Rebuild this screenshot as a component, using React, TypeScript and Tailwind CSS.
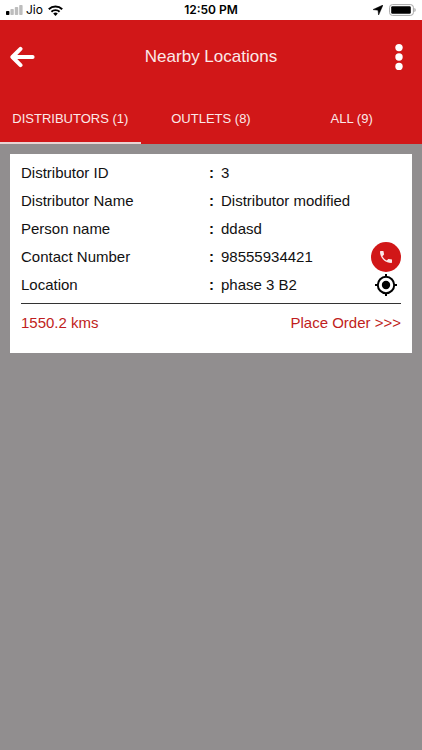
import { MdPhone } from 'react-icons/md';

interface Field {
  label: string;
  value: string;
  action?: 'call' | 'locate';
}

const tabs = ['DISTRIBUTORS (1)', 'OUTLETS (8)', 'ALL (9)'];

const fields: Field[] = [
  { label: 'Distributor ID', value: '3' },
  { label: 'Distributor Name', value: 'Distributor modified' },
  { label: 'Person name', value: 'ddasd' },
  { label: 'Contact Number', value: '98555934421', action: 'call' },
  { label: 'Location', value: 'phase 3 B2', action: 'locate' },
];

function StatusBar() {
  return (
    <div className="grid h-5 grid-cols-3 items-center bg-white px-1.5 text-black">
      <div className="flex items-center">
        <svg width="17" height="10" viewBox="0 0 17 10">
          <rect x="0" y="6" width="3.4" height="4" rx="0.8" fill="#000" />
          <rect x="4.4" y="4" width="3.4" height="6" rx="0.8" fill="#bdbdbd" />
          <rect x="8.8" y="2" width="3.4" height="8" rx="0.8" fill="#bdbdbd" />
          <rect x="13.2" y="0" width="3.4" height="10" rx="0.8" fill="#bdbdbd" />
        </svg>
        <span className="ml-[3px] font-['Inter',sans-serif] text-[12px]">Jio</span>
        <svg className="ml-[5px]" width="15" height="11" viewBox="0 0 15 11" fill="none" stroke="#000">
          <path d="M0.8 4.2a9.6 9.6 0 0 1 13.4 0" strokeWidth="2" />
          <path d="M3.4 6.8a5.9 5.9 0 0 1 8.2 0" strokeWidth="1.9" />
          <path d="M7.5 11 5.2 8.6a3.3 3.3 0 0 1 4.6 0z" fill="#000" stroke="none" />
        </svg>
      </div>
      <span className="text-center font-['Inter',sans-serif] text-[12px] font-semibold">12:50 PM</span>
      <div className="flex items-center justify-end gap-1.5">
        <svg width="10" height="10" viewBox="0 0 10 10">
          <path d="M10 0 5.6 10 5 5.2 0 4.6z" fill="#000" stroke="#000" strokeWidth="0.5" strokeLinejoin="round" />
        </svg>
        <svg width="27" height="12" viewBox="0 0 27 12">
          <rect x="0.6" y="0.6" width="23.8" height="10.8" rx="2.8" fill="none" stroke="#a6a6a6" />
          <rect x="2.2" y="2.2" width="19.6" height="7.6" rx="1.2" fill="#000" />
          <path d="M25.4 4v4c1.7-.5 1.7-3.5 0-4z" fill="#a6a6a6" />
        </svg>
      </div>
    </div>
  );
}

function Header() {
  return (
    <header className="bg-[#d11718] text-[#fbe9e9]">
      <div className="flex h-[74px] items-center justify-between px-[9px]">
        <button type="button" aria-label="Back" className="flex w-7">
          <svg width="26" height="22" viewBox="0 0 26 22" fill="none" stroke="#fff" strokeWidth="4" strokeLinecap="round" strokeLinejoin="round">
            <path d="M23.6 11H4M11.5 2.8 3.4 11l8.1 8.2" />
          </svg>
        </button>
        <h1 className="text-[17px]">Nearby Locations</h1>
        <button type="button" aria-label="More options" className="flex w-7 justify-center">
          <svg width="8" height="28" viewBox="0 0 8 28" fill="#fff">
            <circle cx="4" cy="4.6" r="3.7" />
            <circle cx="4" cy="14" r="3.7" />
            <circle cx="4" cy="23.4" r="3.7" />
          </svg>
        </button>
      </div>
      <nav className="grid h-[50px] grid-cols-3">
        {tabs.map((tab, i) => (
          <button
            key={tab}
            type="button"
            className={`border-b-2 pt-0.5 text-[13px] ${i === 0 ? 'border-[#e8d4d4]' : 'border-transparent'}`}
          >
            {tab}
          </button>
        ))}
      </nav>
    </header>
  );
}

function FieldAction({ action }: { action: 'call' | 'locate' }) {
  if (action === 'call') {
    return (
      <button
        type="button"
        aria-label="Call"
        className="flex size-[30px] items-center justify-center rounded-full bg-[#d11718] text-[#fbe9e9]"
      >
        <MdPhone size={16} />
      </button>
    );
  }

  return (
    <button type="button" aria-label="Show on map" className="flex w-[30px] justify-center">
      <svg width="24" height="24" viewBox="0 0 24 24" fill="none" stroke="#000" strokeWidth="2">
        <circle cx="12" cy="12" r="8.2" />
        <circle cx="12" cy="12" r="4.2" fill="#000" stroke="none" />
        <path d="M12 1v3M12 20v3M1 12h3M20 12h3" />
      </svg>
    </button>
  );
}

function DistributorCard() {
  return (
    <article className="bg-white px-[11px] pt-[5px] text-[15px] text-[#111]">
      <dl className="border-b border-[#333] pb-1">
        {fields.map(({ label, value, action }) => (
          <div key={label} className="flex h-7 items-center">
            <dt className="flex w-[200px] shrink-0">
              <span className="grow">{label}</span>
              <span className="w-3 font-bold">:</span>
            </dt>
            <dd className="flex grow items-center justify-between">
              {value}
              {action && <FieldAction action={action} />}
            </dd>
          </div>
        ))}
      </dl>
      <div className="flex h-[49px] items-start justify-between pt-2 text-[#c01d20]">
        <span>1550.2 kms</span>
        <a href="#order">Place Order &gt;&gt;&gt;</a>
      </div>
    </article>
  );
}

export default function App() {
  return (
    <div className="flex min-h-screen flex-col bg-[#918e8f] font-['Liberation_Sans',Arial,sans-serif]">
      <StatusBar />
      <Header />
      <main className="p-2.5">
        <DistributorCard />
      </main>
    </div>
  );
}
